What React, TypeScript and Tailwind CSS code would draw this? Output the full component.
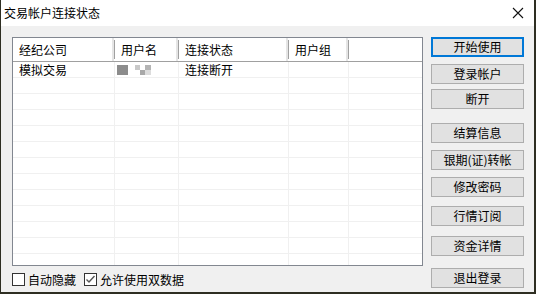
import React from "react";

const font = { fontFamily: '"Noto Sans CJK SC", "Microsoft YaHei", sans-serif' };

const buttons: { label: string; mt: string; focus?: boolean }[] = [
  { label: "开始使用", mt: "mt-0", focus: true },
  { label: "登录帐户", mt: "mt-[7px]" },
  { label: "断开", mt: "mt-[5px]" },
  { label: "结算信息", mt: "mt-[14px]" },
  { label: "银期(证)转帐", mt: "mt-[7px]" },
  { label: "修改密码", mt: "mt-[7px]" },
  { label: "行情订阅", mt: "mt-[9px]" },
  { label: "资金详情", mt: "mt-[10px]" },
  { label: "退出登录", mt: "mt-[12px]" },
];

const cols = ["w-[102px]", "w-[64px]", "w-[110px]", "w-[60px]", "flex-1"];
const headers = ["经纪公司", "用户名", "连接状态", "用户组", ""];

function Cell({ w, children, last, pl = "pl-[6px]" }: { w: string; children?: React.ReactNode; last?: boolean; pl?: string }) {
  return (
    <div className={`${w} h-full flex items-center ${pl} ${last ? "" : "border-r border-[#f0f0f0]"}`}>
      {children}
    </div>
  );
}

function Masked() {
  return (
    <div className="flex items-start pt-[1px]">
      <div className="w-[11px] h-[10px] bg-[#8c8c8c]" />
      <div className="ml-[7px] flex flex-col">
        <div className="flex">
          <div className="w-[5px] h-[5px] bg-[#c8c8c8]" />
          <div className="w-[5px] h-[5px] bg-white" />
          <div className="w-[6px] h-[5px] bg-[#b4b4b4]" />
        </div>
        <div className="flex">
          <div className="w-[5px] h-[5px] bg-white" />
          <div className="w-[5px] h-[5px] bg-[#a8a8a8]" />
          <div className="w-[6px] h-[5px] bg-[#dcdcdc]" />
        </div>
      </div>
    </div>
  );
}

function Check({ checked, label }: { checked?: boolean; label: string }) {
  return (
    <div className="flex items-center gap-[3px]">
      <div className="w-[13px] h-[13px] border border-[#333] bg-white flex items-center justify-center">
        {checked && (
          <svg width="11" height="11" viewBox="0 0 11 11">
            <path d="M1.5 5.5 L4 8 L9.5 2" fill="none" stroke="#555" strokeWidth="1.4" />
          </svg>
        )}
      </div>
      <span className="text-[12px] text-black leading-none">{label}</span>
    </div>
  );
}

export default function App() {
  return (
    <div className="w-[536px] h-[294px] bg-[#2e2e22] pl-[1px] pr-[2px] pb-[2px]" style={font}>
      <div className="w-full h-full bg-[#f0f0f0] flex flex-col">
        <div className="h-[26px] bg-white flex items-center justify-between pl-[3px] pr-[10px]">
          <span className="text-[12px] text-black">交易帐户连接状态</span>
          <svg width="12" height="12" viewBox="0 0 12 12">
            <path d="M1 1 L11 11 M11 1 L1 11" stroke="#111" strokeWidth="1.1" />
          </svg>
        </div>
        <div className="flex flex-1 pt-[11px] pl-[11px]">
          <div className="flex flex-col">
            <div className="w-[411px] h-[229px] border border-[#828790] bg-white overflow-hidden flex flex-col">
              <div className="h-[24px] shrink-0 flex border-b border-[#a0a0a0] text-[12px]">
                {headers.map((h, i) => (
                  <div key={i} className={`${cols[i]} h-full flex items-center`}>
                    <span className="flex-1 pl-[6px]">{h}</span>
                    {i < 4 && (
                      <div className="h-full flex items-center">
                        <div className="w-[2px] h-full bg-[#e5e5e5]" />
                        <div className="w-[1px] h-[19px] bg-[#a0a0a0]" />
                      </div>
                    )}
                  </div>
                ))}
              </div>
              {Array.from({ length: 13 }).map((_, r) => (
                <div key={r} className="h-[16px] shrink-0 flex border-b border-[#f0f0f0] text-[12px] leading-none">
                  <Cell w={cols[0]}>{r === 0 ? "模拟交易" : null}</Cell>
                  <Cell w={cols[1]} pl="pl-[2px]">{r === 0 ? <Masked /> : null}</Cell>
                  <Cell w={cols[2]}>{r === 0 ? "连接断开" : null}</Cell>
                  <Cell w={cols[3]} />
                  <Cell w={cols[4]} last />
                </div>
              ))}
            </div>
            <div className="flex items-center gap-[8px] mt-[7px]">
              <Check label="自动隐藏" />
              <Check checked label="允许使用双数据" />
            </div>
          </div>
          <div className="flex flex-col ml-[8px]">
            {buttons.map((b) => (
              <button
                key={b.label}
                className={`${b.mt} w-[93px] h-[20px] bg-[#e1e1e1] text-[12px] text-black leading-none flex items-center justify-center ${
                  b.focus ? "border-2 border-[#0078d7]" : "border border-[#adadad]"
                }`}
              >
                {b.label}
              </button>
            ))}
          </div>
        </div>
      </div>
    </div>
  );
}
